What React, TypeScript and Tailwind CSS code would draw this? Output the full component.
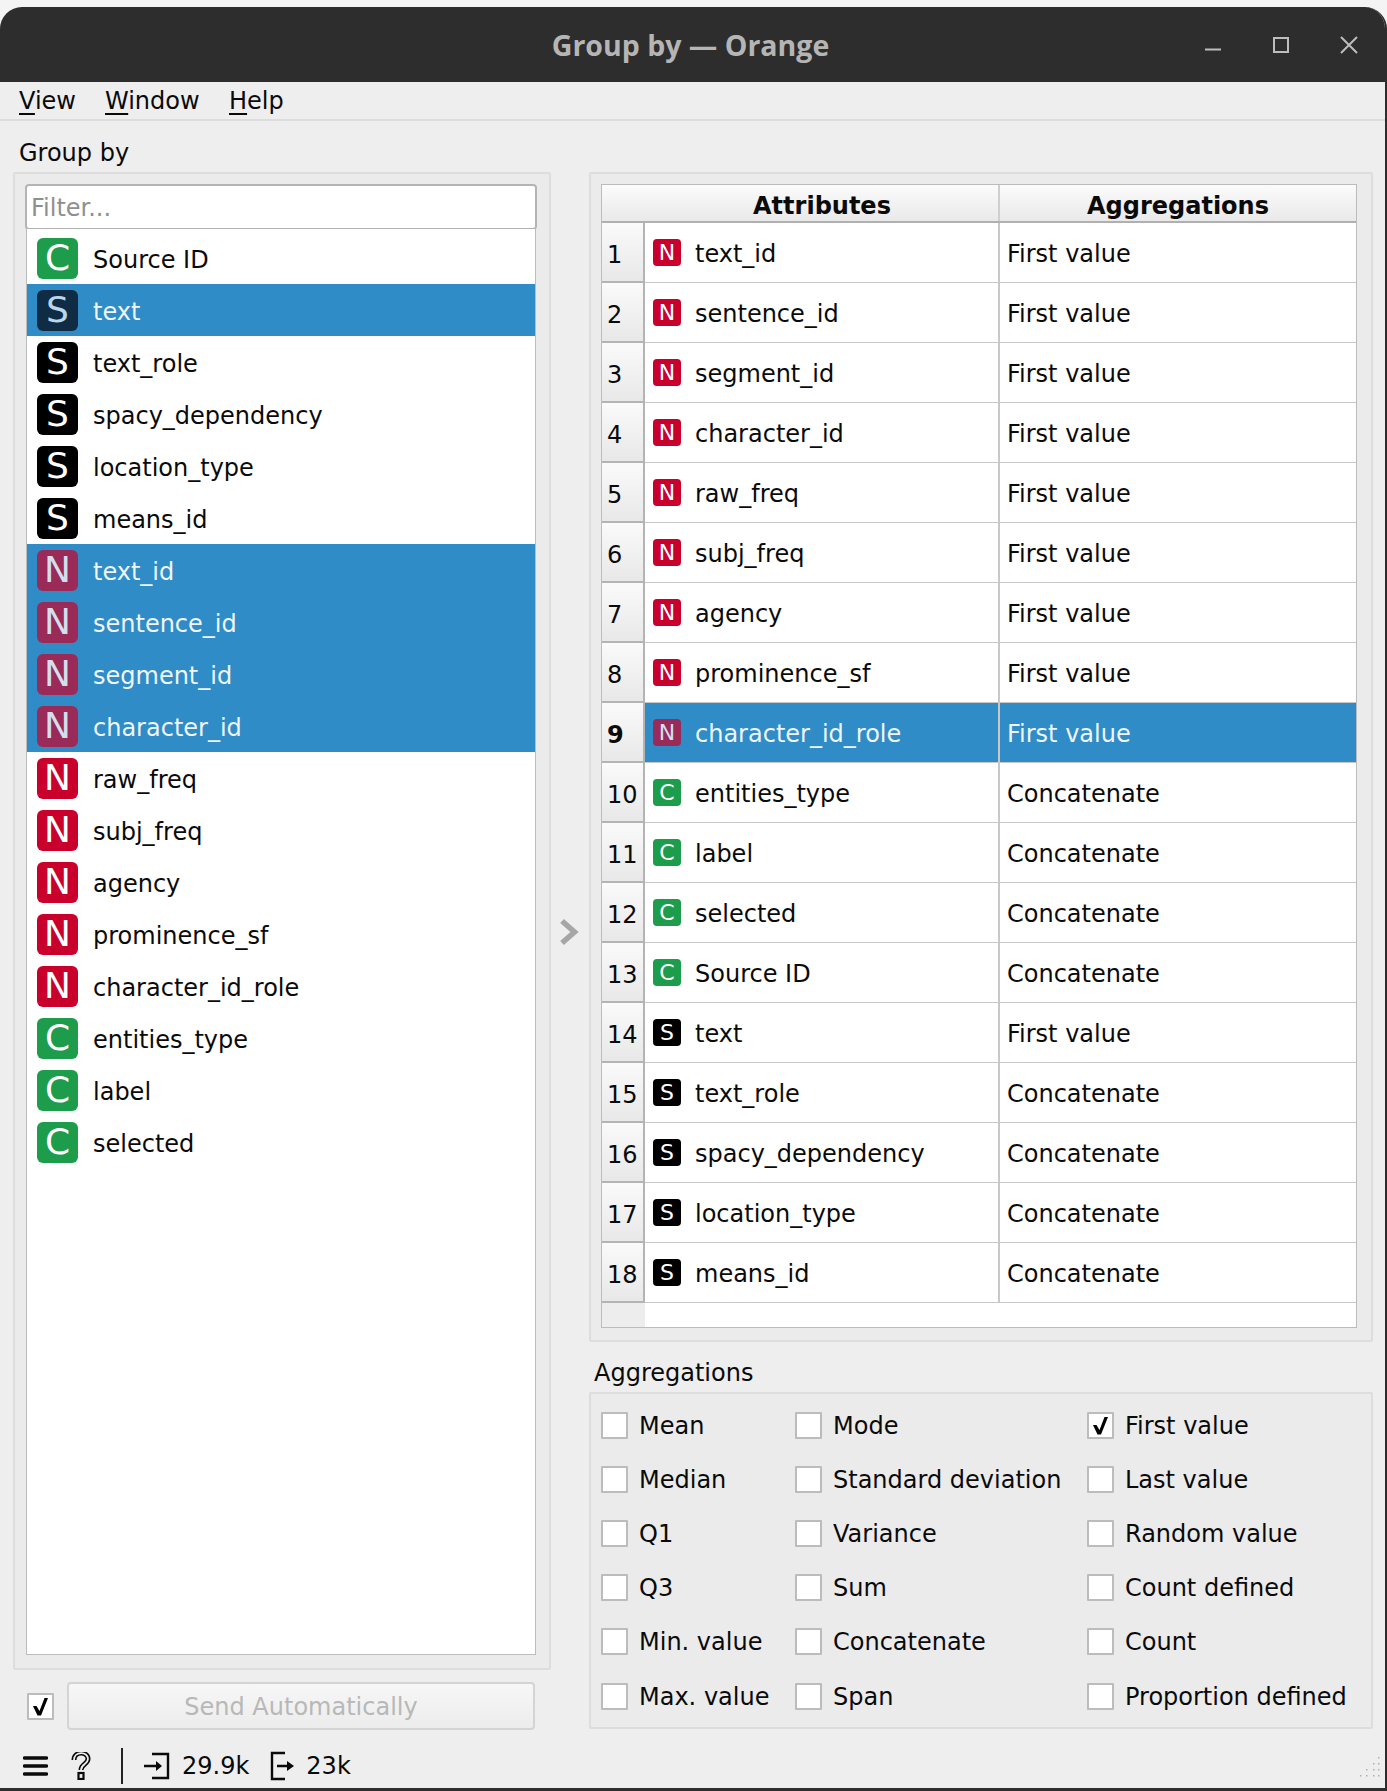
import React from "react";

type Kind = "C" | "S" | "N";

interface Variable {
  name: string;
  kind: Kind;
  selected?: boolean;
}

const variables: Variable[] = [
  { name: "Source ID", kind: "C" },
  { name: "text", kind: "S", selected: true },
  { name: "text_role", kind: "S" },
  { name: "spacy_dependency", kind: "S" },
  { name: "location_type", kind: "S" },
  { name: "means_id", kind: "S" },
  { name: "text_id", kind: "N", selected: true },
  { name: "sentence_id", kind: "N", selected: true },
  { name: "segment_id", kind: "N", selected: true },
  { name: "character_id", kind: "N", selected: true },
  { name: "raw_freq", kind: "N" },
  { name: "subj_freq", kind: "N" },
  { name: "agency", kind: "N" },
  { name: "prominence_sf", kind: "N" },
  { name: "character_id_role", kind: "N" },
  { name: "entities_type", kind: "C" },
  { name: "label", kind: "C" },
  { name: "selected", kind: "C" },
];

const tableRows: { name: string; kind: Kind; agg: string }[] = [
  { name: "text_id", kind: "N", agg: "First value" },
  { name: "sentence_id", kind: "N", agg: "First value" },
  { name: "segment_id", kind: "N", agg: "First value" },
  { name: "character_id", kind: "N", agg: "First value" },
  { name: "raw_freq", kind: "N", agg: "First value" },
  { name: "subj_freq", kind: "N", agg: "First value" },
  { name: "agency", kind: "N", agg: "First value" },
  { name: "prominence_sf", kind: "N", agg: "First value" },
  { name: "character_id_role", kind: "N", agg: "First value" },
  { name: "entities_type", kind: "C", agg: "Concatenate" },
  { name: "label", kind: "C", agg: "Concatenate" },
  { name: "selected", kind: "C", agg: "Concatenate" },
  { name: "Source ID", kind: "C", agg: "Concatenate" },
  { name: "text", kind: "S", agg: "First value" },
  { name: "text_role", kind: "S", agg: "Concatenate" },
  { name: "spacy_dependency", kind: "S", agg: "Concatenate" },
  { name: "location_type", kind: "S", agg: "Concatenate" },
  { name: "means_id", kind: "S", agg: "Concatenate" },
];

const aggregations = [
  "Mean", "Mode", "First value",
  "Median", "Standard deviation", "Last value",
  "Q1", "Variance", "Random value",
  "Q3", "Sum", "Count defined",
  "Min. value", "Concatenate", "Count",
  "Max. value", "Span", "Proportion defined",
];

const badgeColor = (kind: Kind, selected?: boolean) => {
  if (selected) {
    if (kind === "N") return "bg-[#9a2a58] text-[#d3dfec]";
    if (kind === "S") return "bg-[#0f2c44] text-[#b9d6ea]";
    return "bg-[#1f7d6a] text-[#d3e6f0]";
  }
  if (kind === "N") return "bg-[#c9002c] text-white";
  if (kind === "S") return "bg-black text-white";
  return "bg-[#1d9d4b] text-white";
};

const Badge = ({ kind, selected, small }: { kind: Kind; selected?: boolean; small?: boolean }) => (
  <span
    className={`flex shrink-0 items-center justify-center ${
      small ? "h-[27px] w-[28px] rounded-[4px] text-[22px]" : "h-[41px] w-[41px] rounded-[6px] text-[36px]"
    } ${badgeColor(kind, selected)}`}
  >
    {kind}
  </span>
);

const Check = ({ className }: { className?: string }) => (
  <svg viewBox="0 0 27 27" className={className}>
    <path d="M6 13 L9.5 13 L12.5 18 L17.5 5 L21 5 L14 22.5 L10.5 22.5 Z" fill="#000" />
  </svg>
);

const CheckBox = ({ checked }: { checked?: boolean }) => (
  <span className="block h-[27px] w-[27px] shrink-0 rounded-[1px] border-2 border-[#bcbcbc] bg-white">
    {checked && <Check className="-ml-[2px] -mt-[2px] h-[27px] w-[27px]" />}
  </span>
);

const U = ({ children }: { children: React.ReactNode }) => (
  <span className="underline decoration-[2px] underline-offset-[4px]">{children}</span>
);

const App = () => {
  return (
    <div className="h-[1791px] w-[1387px] overflow-hidden bg-gradient-to-b from-[#f4f4f4] to-[#dedede] pt-[7px] font-['DejaVu_Sans',sans-serif] text-[24px] text-[#0a0a0a]">
      <div className="flex h-[1784px] flex-col overflow-hidden rounded-t-[22px] border-r-2 border-b-[3px] border-[#2d2d2d] bg-[#eeeeee]">
        {/* title bar */}
        <div className="relative flex h-[75px] shrink-0 items-center justify-center bg-[#2d2d2d] pt-[2px] pr-[4px]">
          <span className="font-['Open_Sans',sans-serif] text-[28.5px] font-bold text-[#b5b5b5]">Group by — Orange</span>
          <div className="absolute top-0 right-[2px] flex h-full items-center">
            <svg viewBox="0 0 68 66" className="h-[66px] w-[68px]">
              <path d="M26 37.5 H42" stroke="#bdbdbd" strokeWidth="2" />
            </svg>
            <svg viewBox="0 0 68 66" className="h-[66px] w-[68px]">
              <rect x="27" y="26" width="14" height="14" fill="none" stroke="#bdbdbd" strokeWidth="2" />
            </svg>
            <svg viewBox="0 0 68 66" className="h-[66px] w-[68px]">
              <path d="M26 25 L42 41 M42 25 L26 41" stroke="#bdbdbd" strokeWidth="2" />
            </svg>
          </div>
        </div>

        {/* menu bar */}
        <div className="flex h-[39px] shrink-0 items-center border-b-2 border-[#dcdcdc] pl-[19px]">
          <span className="w-[86px]"><U>V</U>iew</span>
          <span className="w-[124px]"><U>W</U>indow</span>
          <span><U>H</U>elp</span>
        </div>

        {/* content */}
        <div className="flex shrink-0 pl-[13px]">
          <div className="flex w-[538px] flex-col">
            <div className="mt-[18px] h-[28px] pl-[6px] leading-[28px]">Group by</div>
            <div className="mt-[5px] flex h-[1498px] flex-col rounded-[2px] border-2 border-[#dddddd] bg-[#ebebeb] pt-[10px] pr-[12px] pb-[13px] pl-[10px]">
              <input
                placeholder="Filter..."
                className="h-[46px] w-full shrink-0 rounded-[4px] border-2 border-[#b4b4b4] bg-white pt-[2px] pl-[4px] text-[24px] outline-none placeholder:text-[#8f8f8f]"
                readOnly
              />
              <div className="mx-[1px] -mt-[1px] flex flex-1 flex-col border-x border-b border-[#bcbcbc] bg-white pt-[3px]">
                {variables.map((v) => (
                  <div
                    key={v.name}
                    className={`flex h-[52px] shrink-0 items-center gap-[15px] pl-[10px] ${
                      v.selected ? "bg-[#308cc6] text-[#eef6fb]" : ""
                    }`}
                  >
                    <Badge kind={v.kind} selected={v.selected} />
                    <span className="pt-[4px]">{v.name}</span>
                  </div>
                ))}
              </div>
            </div>

            <div className="mt-[12px] flex h-[48px] items-center">
              <div className="ml-[14px]">
                <CheckBox checked />
              </div>
              <button className="ml-[13px] h-[48px] w-[468px] rounded-[4px] border-2 border-[#d4d4d4] bg-gradient-to-b from-[#f7f7f7] to-[#ececec] pt-[2px] text-[#b8b8b8]">
                Send Automatically
              </button>
            </div>
          </div>

          {/* arrow */}
          <div className="w-[38px] pt-[797px] pl-[8px]">
            <svg viewBox="0 0 20 28" className="h-[28px] w-[20px]">
              <path d="M3 3 L15.5 14 L3 25" fill="none" stroke="#a6a6a6" strokeWidth="5.5" />
            </svg>
          </div>

          <div className="flex w-[784px] flex-col">
            <div className="mt-[51px] h-[1170px] rounded-[2px] border-2 border-[#dddddd] bg-[#ebebeb] pt-[10px] pr-[14px] pb-[12px] pl-[10px]">
              <div className="flex h-full flex-col border border-[#bcbcbc] bg-white">
                <div className="flex h-[38px] shrink-0 items-center border-b-2 border-[#b0b0b0] bg-gradient-to-b from-[#fbfbfb] to-[#e9e9e9] font-bold">
                  <div className="w-[44px]" />
                  <div className="flex h-full w-[354px] items-center justify-center border-r-2 border-[#cfcfcf] pt-[5px]">
                    Attributes
                  </div>
                  <div className="flex h-full flex-1 items-center justify-center pt-[5px]">Aggregations</div>
                </div>
                {tableRows.map((r, i) => {
                  const selected = i === 8;
                  return (
                    <div key={r.name} className="flex h-[60px] shrink-0">
                      <div
                        className={`flex w-[43px] shrink-0 items-center border-r-2 border-b-2 border-[#b4b4b4] bg-gradient-to-b from-[#fafafa] to-[#e8e8e8] pt-[6px] pl-[5px] ${
                          selected ? "font-bold" : ""
                        }`}
                      >
                        {i + 1}
                      </div>
                      <div
                        className={`flex min-w-0 flex-1 border-b border-[#c8c8c8] ${
                          selected ? "bg-[#308cc6] text-[#eef6fb]" : ""
                        }`}
                      >
                        <div className="flex w-[355px] shrink-0 items-center gap-[14px] border-r-2 border-[#c8c8c8] pl-[8px]">
                          <span className="-mt-[1px]">
                            <Badge kind={r.kind} selected={selected} small />
                          </span>
                          <span className="pt-[3px]">{r.name}</span>
                        </div>
                        <div className="flex flex-1 items-center pt-[3px] pl-[7px]">{r.agg}</div>
                      </div>
                    </div>
                  );
                })}
                <div className="flex-1 border-0">
                  <div className="h-full w-[43px] bg-[#ededed]" />
                </div>
              </div>
            </div>

            <div className="mt-[17px] h-[28px] pl-[5px] leading-[28px]">Aggregations</div>
            <div className="mt-[5px] grid h-[337px] grid-cols-[194px_292px_1fr] content-start rounded-[2px] border-2 border-[#dddddd] bg-[#ebebeb] pt-[4px] pl-[10px]">
              {aggregations.map((name) => (
                <div key={name} className="flex h-[54.2px] items-center gap-[11px]">
                  <CheckBox checked={name === "First value"} />
                  <span className="pt-[1px]">{name}</span>
                </div>
              ))}
            </div>
          </div>
        </div>

        {/* status bar */}
        <div className="flex flex-1 items-center pt-[14px] pl-[23px]">
          <svg viewBox="0 0 25 20" className="h-[20px] w-[25px] shrink-0">
            <path d="M1.5 2 H23.5 M1.5 10 H23.5 M1.5 18 H23.5" stroke="#0a0a0a" strokeWidth="3.4" strokeLinecap="round" />
          </svg>
          <svg viewBox="0 0 20 28" className="ml-[23px] h-[28px] w-[20px] shrink-0">
            <path d="M3 8 C3 -1 17 -1 17 7 C17 12 10 12 10 18" fill="none" stroke="#0a0a0a" strokeWidth="5" />
            <path d="M3 8 C3 -1 17 -1 17 7 C17 12 10 12 10 18" fill="none" stroke="#eeeeee" strokeWidth="1.8" />
            <rect x="7.5" y="21" width="5" height="6" fill="#eeeeee" stroke="#0a0a0a" strokeWidth="2.2" />
          </svg>
          <span className="ml-[30px] h-[36px] w-[2px] bg-[#222222]" />
          <svg viewBox="0 0 26 28" className="ml-[21px] h-[28px] w-[26px] shrink-0">
            <path d="M8 2 H24 V26 H8 M0 14 H15" fill="none" stroke="#0a0a0a" strokeWidth="2.4" />
            <path d="M12 9 L18 14 L12 19 Z" fill="#0a0a0a" />
          </svg>
          <span className="ml-[12px]">29.9k</span>
          <svg viewBox="0 0 26 30" className="ml-[21px] h-[30px] w-[26px] shrink-0">
            <path d="M15 2 H2 V28 H15 M7 15 H20" fill="none" stroke="#0a0a0a" strokeWidth="2.4" />
            <path d="M17 10 L24 15 L17 20 Z" fill="#0a0a0a" />
          </svg>
          <span className="ml-[10px]">23k</span>
          <svg viewBox="0 0 22 22" className="mt-[2px] mr-[4px] ml-auto h-[22px] w-[22px] shrink-0" fill="#b0b0b0">
            <rect x="19" y="1" width="1.5" height="1.5" />
            <rect x="14" y="7" width="1.5" height="1.5" />
            <rect x="19" y="7" width="1.5" height="1.5" />
            <rect x="7" y="13" width="1.5" height="1.5" />
            <rect x="14" y="13" width="1.5" height="1.5" />
            <rect x="19" y="13" width="1.5" height="1.5" />
            <rect x="1" y="19" width="1.5" height="1.5" />
            <rect x="7" y="19" width="1.5" height="1.5" />
            <rect x="14" y="19" width="1.5" height="1.5" />
            <rect x="19" y="19" width="1.5" height="1.5" />
          </svg>
        </div>
      </div>
    </div>
  );
};

export default App;
